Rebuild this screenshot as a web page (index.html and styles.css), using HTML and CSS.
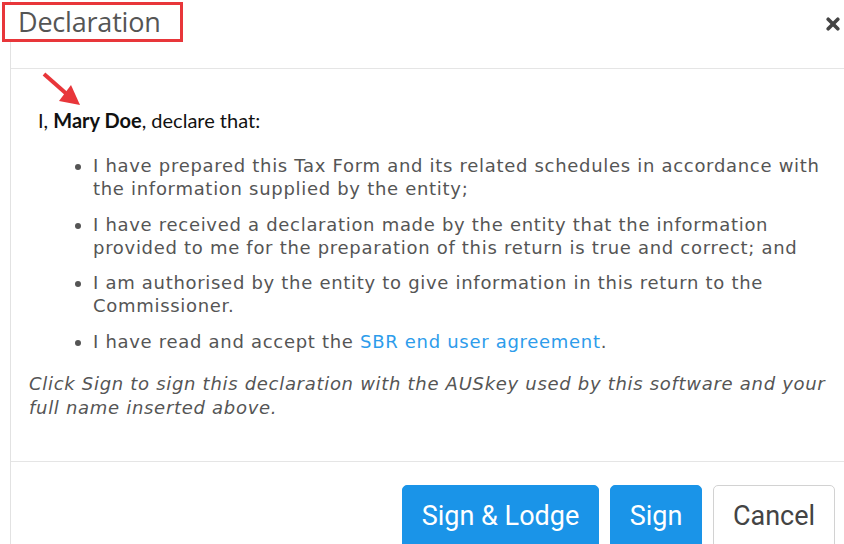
FILE: index.html
```html
<!DOCTYPE html>
<html>
<head>
<meta charset="utf-8">
<link rel="stylesheet" href="styles.css">
</head>
<body>
<div class="page">
  <div class="modal">
    <div class="modal-header">
      <button class="close" aria-label="Close">
        <svg width="14" height="14" viewBox="0 0 14 14"><path d="M2.2 2.2 L11.8 11.8 M11.8 2.2 L2.2 11.8" stroke="#444" stroke-width="3.6" stroke-linecap="round"/></svg>
      </button>
    </div>
    <div class="modal-body">
      <p class="intro">I, <b>Mary Doe</b>, declare that:</p>
      <ul class="list">
        <li>I have prepared this Tax Form and its related schedules in accordance with the information supplied by the entity;</li>
        <li>I have received a declaration made by the entity that the information provided to me for the preparation of this return is true and correct; and</li>
        <li>I am authorised by the entity to give information in this return to the Commissioner.</li>
        <li>I have read and accept the <a class="link" href="#">SBR end user agreement</a>.</li>
      </ul>
      <p class="note">Click Sign to sign this declaration with the AUSkey used by this software and your full name inserted above.</p>
    </div>
    <div class="modal-footer">
      <button class="btn btn-primary btn-lodge">Sign &amp; Lodge</button>
      <button class="btn btn-primary btn-sign">Sign</button>
      <button class="btn btn-default btn-cancel">Cancel</button>
    </div>
  </div>
  <h4 class="title">Declaration</h4>
  <svg class="arrow" width="42" height="36" viewBox="0 0 42 36">
    <path d="M2 2 L27 24" stroke="#e8363a" stroke-width="4" stroke-linecap="butt"/>
    <path d="M38 33 L17 29 L29 13 Z" fill="#e8363a"/>
  </svg>
</div>
</body>
</html>
```
FILE: styles.css
```css
html, body {
  margin: 0;
  padding: 0;
  background: #ffffff;
}
.page {
  position: relative;
  width: 844px;
  height: 544px;
  overflow: hidden;
}
.modal {
  margin-left: 10px;
  border-left: 1px solid #e2e2e2;
  height: 544px;
  display: flex;
  flex-direction: column;
}
.modal-header {
  height: 69px;
  flex: none;
  border-bottom: 1px solid #e5e5e5;
  display: flex;
  justify-content: flex-end;
  align-items: flex-start;
  box-sizing: border-box;
}
.close {
  border: 0;
  background: none;
  padding: 0;
  margin: 17px 4px 0 0;
  width: 14px;
  height: 14px;
  display: block;
}
.close svg { display: block; }
.title {
  position: absolute;
  left: 2px;
  top: 2px;
  width: 181px;
  height: 40px;
  box-sizing: border-box;
  margin: 0;
  border: 3px solid #e8363a;
  background: #fff;
  padding-left: 13px;
  font-family: "Open Sans", sans-serif;
  font-weight: 400;
  font-size: 27px;
  letter-spacing: -0.2px;
  line-height: 34px;
  color: #555;
}
.arrow {
  position: absolute;
  left: 42px;
  top: 72px;
}
.modal-body {
  flex: none;
  padding: 0 0 0 18px;
  height: 393px;
  box-sizing: border-box;
  border-bottom: 1px solid #e5e5e5;
  font-family: "DejaVu Sans", Verdana, sans-serif;
  font-size: 18px;
  letter-spacing: 0.7px;
  color: #555;
  overflow: hidden;
}
.intro {
  font-family: Lato, "Open Sans", sans-serif;
  font-size: 20px;
  letter-spacing: 0;
  color: #111;
  margin: 39px 0 0 9px;
  line-height: 24px;
}
.intro b { font-weight: 700; }
.list {
  margin: 22px 0 0 0;
  padding-left: 64px;
  line-height: 23px;
}
.list li {
  margin-bottom: 12.5px;
}
.link {
  color: #2d9ceb;
  text-decoration: none;
}
.note {
  font-style: italic;
  line-height: 24px;
  margin: 19px 0 0 0;
  padding-right: 10px;
}
.modal-footer {
  display: flex;
  justify-content: flex-end;
  gap: 11px;
  padding: 23px 9px 0 0;
}
.btn {
  font-family: Roboto, "Liberation Sans", sans-serif;
  font-size: 27px;
  height: 64px;
  border-radius: 5px;
  padding: 0 0 2px 0;
  box-sizing: border-box;
  border: 1px solid transparent;
  margin: 0;
}
.btn-primary {
  background: #1a94e8;
  color: #fff;
  border-color: #1a94e8;
}
.btn-default {
  background: #fff;
  color: #444;
  border-color: #d2d2d2;
}
.btn-lodge { width: 197px; }
.btn-sign { width: 92px; }
.btn-cancel { width: 122px; }
```
